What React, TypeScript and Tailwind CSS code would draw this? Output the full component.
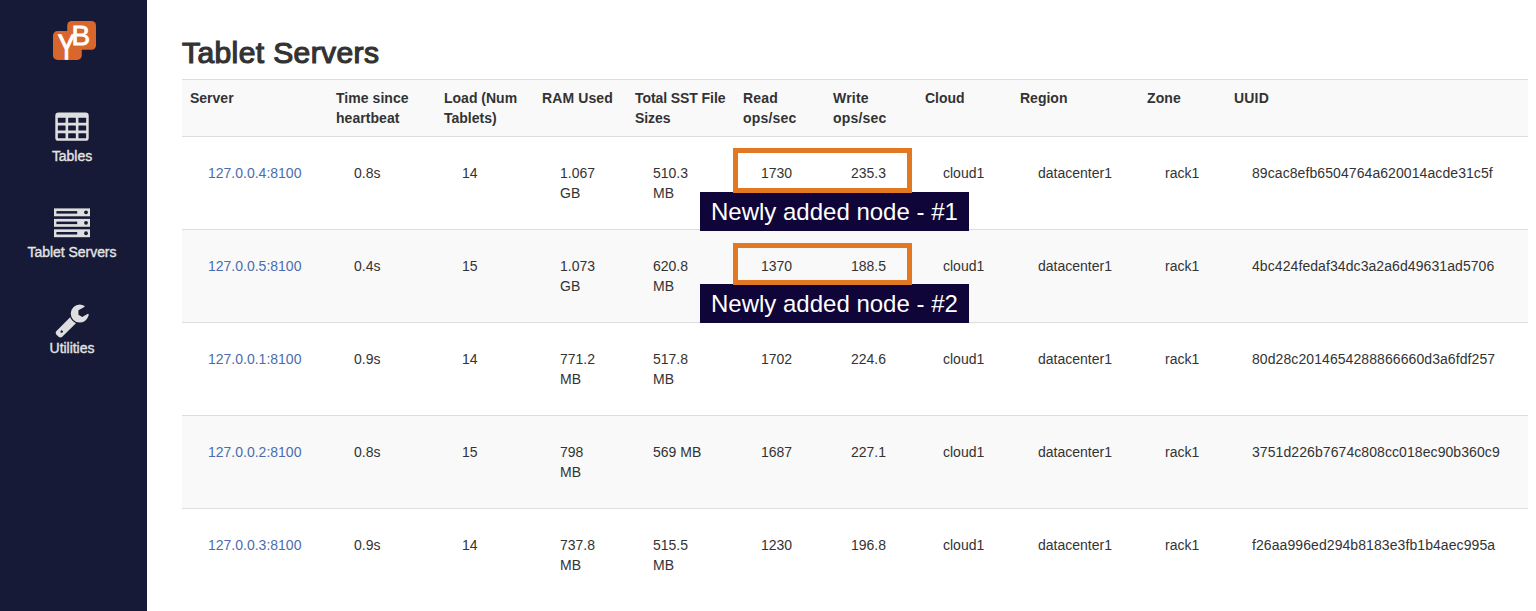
import React from "react";

const COLS =
  "grid grid-cols-[146px_108px_98px_93px_108px_90px_92px_95px_127px_87px_302px] w-[1346px] border-t border-[#dddddd]";

type Note = { box: string; label: string; text: string };
type Server = { cells: string[]; note?: Note };

const headers: { text: string; cls: string }[] = [
  { text: "Server", cls: "tracking-[0px]" },
  { text: "Time since heartbeat", cls: "tracking-[0.05px]" },
  { text: "Load (Num Tablets)", cls: "tracking-[0px]" },
  { text: "RAM Used", cls: "tracking-[0.1px]" },
  { text: "Total SST File Sizes", cls: "tracking-[-0.08px] whitespace-nowrap" },
  { text: "Read ops/sec", cls: "tracking-[0.2px]" },
  { text: "Write ops/sec", cls: "tracking-[0.2px]" },
  { text: "Cloud", cls: "tracking-[0px]" },
  { text: "Region", cls: "tracking-[0px]" },
  { text: "Zone", cls: "tracking-[0.1px]" },
  { text: "UUID", cls: "tracking-[0.2px]" },
];

const servers: Server[] = [
  {
    cells: ["127.0.0.4:8100", "0.8s", "14", "1.067 GB", "510.3 MB", "1730", "235.3", "cloud1", "datacenter1", "rack1", "89cac8efb6504764a620014acde31c5f"],
    note: { box: "top-[11px] h-[45px]", label: "top-[55px]", text: "Newly added node - #1" },
  },
  {
    cells: ["127.0.0.5:8100", "0.4s", "15", "1.073 GB", "620.8 MB", "1370", "188.5", "cloud1", "datacenter1", "rack1", "4bc424fedaf34dc3a2a6d49631ad5706"],
    note: { box: "top-[13px] h-[42px]", label: "top-[54px]", text: "Newly added node - #2" },
  },
  { cells: ["127.0.0.1:8100", "0.9s", "14", "771.2 MB", "517.8 MB", "1702", "224.6", "cloud1", "datacenter1", "rack1", "80d28c2014654288866660d3a6fdf257"] },
  { cells: ["127.0.0.2:8100", "0.8s", "15", "798 MB", "569 MB", "1687", "227.1", "cloud1", "datacenter1", "rack1", "3751d226b7674c808cc018ec90b360c9"] },
  { cells: ["127.0.0.3:8100", "0.9s", "14", "737.8 MB", "515.5 MB", "1230", "196.8", "cloud1", "datacenter1", "rack1", "f26aa996ed294b8183e3fb1b4aec995a"] },
];

function Logo() {
  return (
    <svg width="44" height="40" viewBox="0 0 44 40" className="block overflow-visible">
      <rect x="14.2" y="0.9" width="28.8" height="28.8" rx="4.5" fill="#d9662c" />
      <rect x="0" y="11.1" width="28.8" height="28.8" rx="4.5" fill="#d9662c" />
      <g fill="#fff" stroke="#fff" fontFamily="Liberation Sans, sans-serif">
        <text transform="translate(4.9 39.4) scale(0.74 1)" fontSize="34.5" strokeWidth="1.3">Y</text>
        <text transform="translate(18.4 24.6)" fontSize="28" strokeWidth="0.8">B</text>
      </g>
    </svg>
  );
}

function TableIcon() {
  const xs = [192, 704, 1216];
  const ys = [384, 768, 1152];
  return (
    <svg width="36" height="36" viewBox="0 0 1792 1792" className="block">
      <rect x="64" y="128" width="1664" height="1408" rx="160" fill="#dedede" />
      {ys.map((y) => xs.map((x) => <rect key={`${x}-${y}`} x={x} y={y} width="384" height="256" rx="32" fill="#161a36" />))}
    </svg>
  );
}

function ServerIcon() {
  return (
    <svg width="36" height="36" viewBox="0 0 36 36" className="block">
      {[2.4, 12.9, 23.3].map((y) => (
        <g key={y}>
          <rect x="0" y={y} width="36" height="7.9" fill="#dedede" />
          <rect x="2.4" y={y + 2.7} width="20.8" height="2.5" fill="#161a36" />
          <circle cx="32" cy={y + 3.95} r="1.9" fill="#161a36" />
        </g>
      ))}
    </svg>
  );
}

function WrenchIcon() {
  return (
    <svg width="36" height="36" viewBox="0 0 1792 1792" className="block" fill="#dedede">
      <path d="M448 1472q0-26-19-45t-45-19-45 19-19 45 19 45 45 19 45-19 19-45zm644-420l-682 682q-37 37-90 37-52 0-91-37l-106-108q-38-36-38-90 0-53 38-91l681-681q39 98 114.5 173.5t173.5 114.5zm634-435q0 39-23 106-47 134-164.5 217.5t-258.5 83.5q-185 0-316.5-131.5t-131.5-316.5 131.5-316.5 316.5-131.5q58 0 121.500 16.500t107.500 46.500q16 11 16 28t-16 28l-293 169v224l193 107q5-3 79-48.500t135.500-81 70.500-35.500q15 0 23.500 10t8.500 25z" />
    </svg>
  );
}

function NavItem({ icon, label }: { icon: React.ReactNode; label: string }) {
  return (
    <a className="flex h-24 flex-col items-center">
      {icon}
      <span className="text-[14px] leading-5 tracking-[-0.04px] text-[#e4e4e4] [-webkit-text-stroke:0.35px_#e4e4e4]">{label}</span>
    </a>
  );
}

export default function App() {
  return (
    <div className="flex h-[611px] w-full overflow-hidden bg-white font-['Liberation_Sans',Arial,sans-serif] text-[14px] leading-5 text-[#333333]">
      <nav className="flex w-[147px] shrink-0 flex-col items-center bg-[#161a36] pt-5 pr-[3px]">
        <div className="ml-[6px] h-[90px]">
          <Logo />
        </div>
        <NavItem icon={<TableIcon />} label="Tables" />
        <NavItem icon={<ServerIcon />} label="Tablet Servers" />
        <NavItem icon={<WrenchIcon />} label="Utilities" />
      </nav>
      <main className="pt-9 pl-[35px]">
        <h2 className="h-[43px] text-[30px] leading-[33px] font-normal tracking-[0.4px] [-webkit-text-stroke:1.2px_#333333]">Tablet Servers</h2>
        <div className={`${COLS} h-[57px] bg-[#f9f9f9]`}>
          {headers.map((h) => (
            <div key={h.text} className={`py-2 pl-2 font-bold ${h.cls}`}>
              {h.text === "Total SST File Sizes" ? (
                <>
                  Total SST File
                  <br />
                  Sizes
                </>
              ) : (
                <span className="block pr-2">{h.text}</span>
              )}
            </div>
          ))}
        </div>
        {servers.map((s, r) => (
          <div key={s.cells[0]} className={`${COLS} h-[93px] ${r % 2 ? "bg-[#f9f9f9]" : "bg-white"}`}>
            {s.cells.map((c, i) => (
              <div
                key={i}
                className={`relative pt-[26px] pl-[26px] ${i === 0 ? "text-[#4a6db0]" : ""} ${i === 3 || i === 4 ? "pr-[26px]" : "whitespace-nowrap"} ${i === 10 ? "tracking-[0.08px]" : ""}`}
              >
                {c}
                {i === 5 && s.note && (
                  <>
                    <div className={`absolute left-[-2px] z-20 w-[179px] border-[5px] border-[#e27822] ${s.note.box}`} />
                    <div className={`absolute left-[-35px] z-10 h-[39px] w-[269px] bg-[#100539] pl-[11px] text-[24px] leading-[40px] text-white ${s.note.label}`}>
                      {s.note.text}
                    </div>
                  </>
                )}
              </div>
            ))}
          </div>
        ))}
      </main>
    </div>
  );
}
